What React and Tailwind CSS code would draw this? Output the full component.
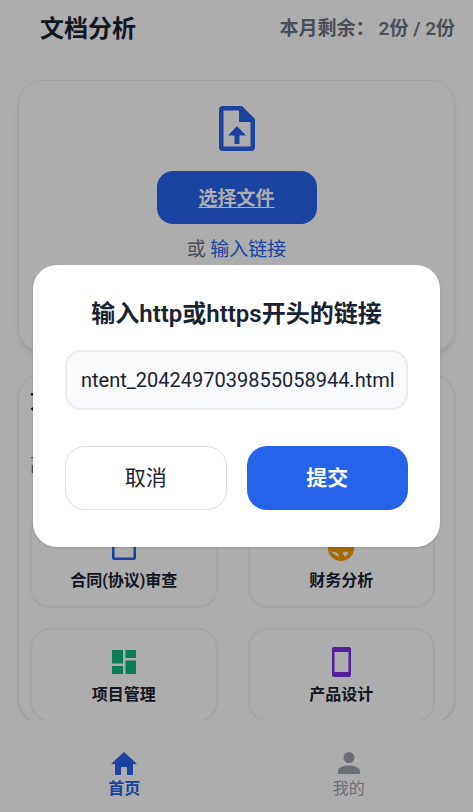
import { useState } from "react";

function UploadFileIcon() {
  return (
    <svg viewBox="0 0 36 45" className="h-[45px] w-9" fill="#2563eb" aria-hidden="true">
      <path
        fillRule="evenodd"
        d="M4 0H23L36 13V41a4 4 0 0 1-4 4H4a4 4 0 0 1-4-4V4a4 4 0 0 1 4-4ZM4.500 4.500V40.500H31.500V16H20V4.500Z"
      />
      <path d="M18 20 27 29.500H20.500V38H15.500V29.500H9Z" />
    </svg>
  );
}

function ContractIcon() {
  return (
    <svg viewBox="0 0 24 24" className="size-6" fill="none" stroke="#2563eb" strokeWidth="2.500" aria-hidden="true">
      <rect x="1.250" y="1.250" width="21.500" height="21.500" rx="1" />
    </svg>
  );
}

function FinanceIcon() {
  return (
    <svg viewBox="0 0 26 26" className="size-[26px]" aria-hidden="true">
      <circle cx="13" cy="13" r="13" fill="#f59e0b" />
      <path d="M2.500 16 5 17 7.500 17 10 18.500 11 21.500 8 20.500 5.500 18.500ZM14.500 17.500 20 16.500 19.500 19 17.500 21.500 16 20.500Z" fill="#fff" />
    </svg>
  );
}

function ProjectIcon() {
  return (
    <svg viewBox="0 0 24 24" className="size-6" fill="#10b981" aria-hidden="true">
      <path d="M0 0H11V13.500H0ZM13.500 0H24V8H13.500ZM0 16H11V24H0ZM13.500 10.500H24V24H13.500Z" />
    </svg>
  );
}

function ProductIcon() {
  return (
    <svg viewBox="0 0 19 30" className="h-[30px] w-[19px]" fill="#7c2be8" aria-hidden="true">
      <path
        fillRule="evenodd"
        d="M2 0H17a2 2 0 0 1 2 2V28a2 2 0 0 1-2 2H2a2 2 0 0 1-2-2V2a2 2 0 0 1 2-2ZM2.500 5V25H16.500V5Z"
      />
    </svg>
  );
}

function HomeIcon() {
  return (
    <svg viewBox="0 0 26 23" className="h-[23px] w-[26px]" fill="#2563eb" aria-hidden="true">
      <path d="M13 0 26 12H22V23H16V15H10V23H4V12H0Z" />
    </svg>
  );
}

function UserIcon() {
  return (
    <svg viewBox="0 0 22 22" className="size-[22px]" fill="#9ca3af" aria-hidden="true">
      <circle cx="11" cy="5.500" r="5.500" />
      <path d="M0 22V19C0 15.500 6 13.500 11 13.500S22 15.500 22 19V22Z" />
    </svg>
  );
}

const scenes = [
  { label: "合同(协议)审查", Icon: ContractIcon },
  { label: "财务分析", Icon: FinanceIcon },
  { label: "项目管理", Icon: ProjectIcon },
  { label: "产品设计", Icon: ProductIcon },
];

export default function App() {
  const [link, setLink] = useState("ntent_2042497039855058944.html");

  return (
    <div className="relative flex h-screen flex-col overflow-hidden bg-white font-['Roboto','Noto_Sans_CJK_SC',sans-serif] text-[#1a2333]">
      <header className="flex h-14 shrink-0 items-center justify-between pl-10 pr-[18px] pt-0.5">
        <h1 className="text-2xl font-semibold">文档分析</h1>
        <p className="text-[19px] font-semibold text-[#6b7280]">
          本月剩余：<span className="ml-1">2份 / 2份</span>
        </p>
      </header>

      <main className="flex min-h-0 flex-1 flex-col gap-[22px] overflow-hidden px-[18px] pt-6">
        <section className="flex h-[272px] shrink-0 flex-col items-center rounded-3xl border border-[#f0f0f0] pt-[25px] shadow-md">
          <UploadFileIcon />
          <button className="mt-5 h-[53px] w-40 rounded-2xl bg-[#2563eb] pt-1 text-[19px] font-semibold text-white underline underline-offset-2">
            选择文件
          </button>
          <p className="mt-3 text-[19px] text-[#6b7280]">
            或{" "}
            <a href="#link" className="text-[#2563eb]">
              输入链接
            </a>
          </p>
        </section>

        <section className="shrink-0 rounded-3xl border border-[#ececec] pl-[11px] pr-[19px] pt-2 shadow-sm">
          <h2 className="h-16 text-[22px] font-semibold leading-9">文档分析</h2>
          <p className="h-[67px] text-lg leading-9 text-[#6b7280]">高频场景</p>
          <div className="grid grid-cols-2 gap-x-[30px] gap-y-5">
            {scenes.map(({ label, Icon }) => (
              <button
                key={label}
                className="flex h-[94px] flex-col items-center rounded-[20px] border-2 border-[#f3f4f6] pt-4"
              >
                <span className="flex h-8 items-center">
                  <Icon />
                </span>
                <span className="mt-1 text-base font-semibold leading-[26px]">{label}</span>
              </button>
            ))}
          </div>
        </section>
      </main>

      <nav className="grid h-[92px] shrink-0 grid-cols-2 px-3 text-base leading-7">
        <a href="#home" className="flex flex-col items-center pt-[31px] font-semibold text-[#2563eb]">
          <span className="flex h-6 items-center">
            <HomeIcon />
          </span>
          首页
        </a>
        <a href="#me" className="flex flex-col items-center pt-[31px] text-[#9ca3af]">
          <span className="flex h-6 items-center">
            <UserIcon />
          </span>
          我的
        </a>
      </nav>

      <div className="absolute inset-0 flex items-center justify-center bg-black/32 px-[33px]">
        <div role="dialog" aria-labelledby="dialog-title" className="w-full rounded-3xl bg-white px-8 pb-[37px] pt-[33px] shadow-sm">
          <h2 id="dialog-title" className="text-center text-2xl font-semibold leading-8">
            输入http或https开头的链接
          </h2>
          <input
            aria-labelledby="dialog-title"
            value={link}
            onChange={(e) => setLink(e.target.value)}
            className="mt-5 h-[60px] w-full rounded-2xl border-2 border-[#e9ebef] bg-[#f8f9fb] pl-3.5 pr-2 text-xl outline-none"
          />
          <div className="mt-9 grid grid-cols-2 gap-5">
            <button className="h-16 rounded-[20px] border border-[#dcdee2] pt-0.5 text-[21px]">取消</button>
            <button className="h-16 rounded-[20px] bg-[#2563eb] pt-0.5 text-[21px] font-semibold text-white">提交</button>
          </div>
        </div>
      </div>
    </div>
  );
}
